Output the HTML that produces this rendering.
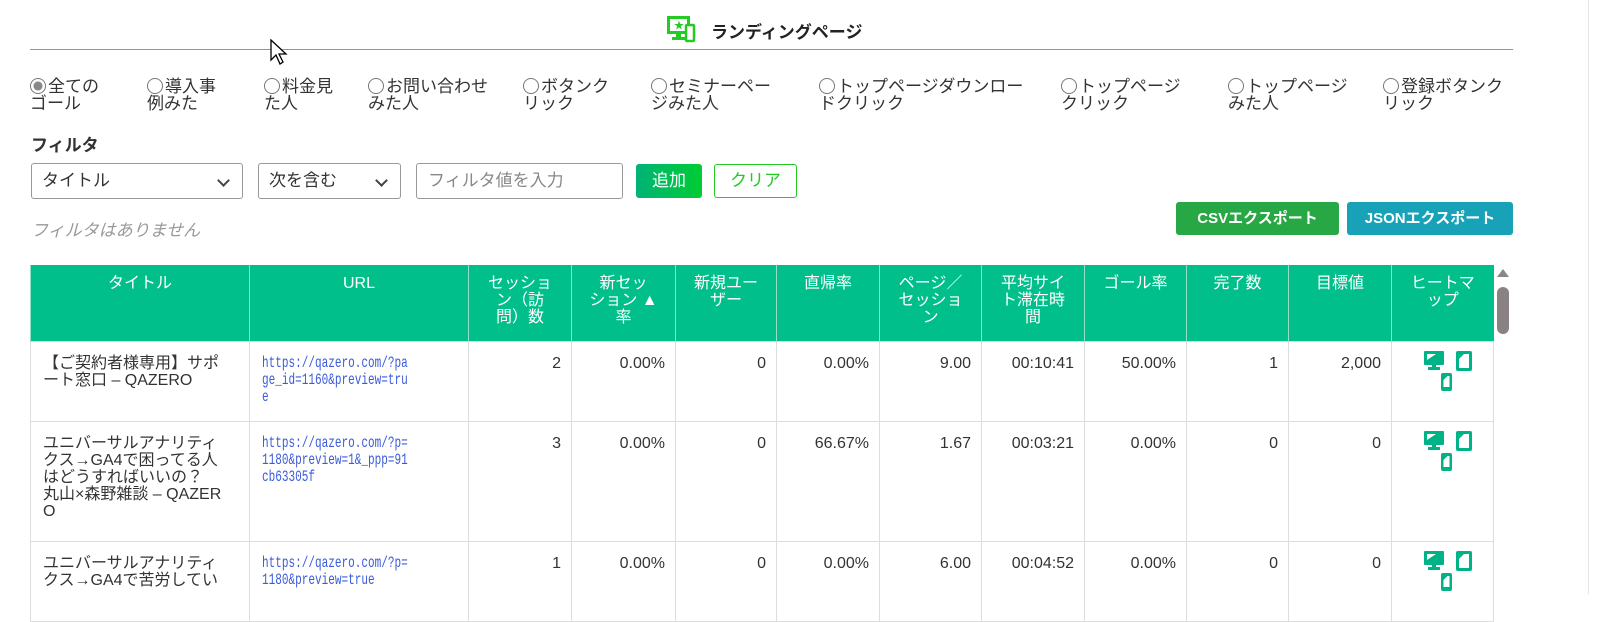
<!DOCTYPE html>
<html><head><meta charset="utf-8"><style>
*{box-sizing:border-box;margin:0;padding:0}
body{width:1602px;height:594px;overflow:hidden;background:#fff;font-family:"Liberation Sans","Noto Sans CJK JP",sans-serif;color:#333;position:relative;font-size:15px}
.abs{position:absolute}
.radio{position:absolute;top:78px;font-size:17px;line-height:17px;color:#333;white-space:nowrap}
.radio i{display:inline-block;width:16px;height:16px;border:1px solid #777;border-radius:50%;vertical-align:-2px;margin-right:2px;background:#fff}
.radio i.on{background:radial-gradient(#888 0 4px,#fff 5px)}
.sel{position:absolute;top:163px;height:36px;border:1px solid #999;border-radius:3px;font-size:17px;line-height:34px;padding-left:10px;color:#333}
.sel:after{content:"";position:absolute;right:14px;top:12px;width:7px;height:7px;border-right:2px solid #444;border-bottom:2px solid #444;transform:rotate(45deg)}
table{position:absolute;left:30px;top:265px;width:1463px;border-collapse:collapse;table-layout:fixed;font-size:16px}
th{background:#00bf8a;color:#fff;font-weight:normal;vertical-align:top;padding:10px 4px 0;height:76px;line-height:17px;border-left:1px solid #8fe0c6;text-align:center;white-space:nowrap;overflow:hidden}
td{border:1px solid #ddd;vertical-align:top;padding:13px 10px;line-height:17px;text-align:right;white-space:nowrap;overflow:hidden}
td.t{text-align:left;padding-left:12px}
td.u{text-align:left;color:#3b5bdb;font-family:"Liberation Mono",monospace;font-size:16px;padding-left:12px}
td.u div{width:195px;overflow:hidden}
td.u span{display:inline-block;transform:scaleX(0.69);transform-origin:0 0;line-height:17px}
td.h{text-align:center}
</style></head><body>
<svg class="abs" style="left:667px;top:16px" width="30" height="27" viewBox="0 0 30 27"><rect x="1.5" y="1.5" width="20" height="15" fill="none" stroke="#2c2" stroke-width="3"/><rect x="9" y="16" width="5" height="5" fill="#2c2"/><rect x="5" y="21" width="13" height="3" fill="#2c2"/><text x="7" y="13" font-size="10" fill="#2c2">★</text><rect x="19" y="9" width="8" height="16" rx="1" fill="#fff" stroke="#2c2" stroke-width="2.5"/></svg>
<div class="abs" style="left:711px;top:18px;font-size:17px;font-weight:bold;color:#222">ランディングページ</div>
<div class="abs" style="left:30px;top:49px;width:1483px;height:1px;background:#44cc44"></div>
<svg class="abs" style="left:270px;top:39px" width="20" height="28" viewBox="0 0 20 28"><path d="M1 1 L1 21 L6 16 L10 25 L13 23 L9 15 L16 15 Z" fill="#fff" stroke="#000" stroke-width="1.3"/></svg>
<div class="radio" style="left:30px"><i class="on"></i>全ての<br>ゴール</div>
<div class="radio" style="left:147px"><i></i>導入事<br>例みた</div>
<div class="radio" style="left:264px"><i></i>料金見<br>た人</div>
<div class="radio" style="left:368px"><i></i>お問い合わせ<br>みた人</div>
<div class="radio" style="left:523px"><i></i>ボタンク<br>リック</div>
<div class="radio" style="left:651px"><i></i>セミナーペー<br>ジみた人</div>
<div class="radio" style="left:819px"><i></i>トップページダウンロー<br>ドクリック</div>
<div class="radio" style="left:1061px"><i></i>トップページ<br>クリック</div>
<div class="radio" style="left:1228px"><i></i>トップページ<br>みた人</div>
<div class="radio" style="left:1383px"><i></i>登録ボタンク<br>リック</div>
<div class="abs" style="left:31px;top:131px;font-size:17px;font-weight:bold;color:#333">フィルタ</div>
<div class="sel" style="left:31px;width:212px">タイトル</div>
<div class="sel" style="left:258px;width:143px">次を含む</div>
<div class="abs" style="left:416px;top:163px;width:207px;height:36px;border:1px solid #999;border-radius:3px;font-size:17px;line-height:34px;padding-left:11px;color:#888">フィルタ値を入力</div>
<div class="abs" style="left:636px;top:164px;width:66px;height:34px;background:linear-gradient(90deg,#00b377,#00cc33);border-radius:3px;color:#fff;font-size:17px;line-height:34px;text-align:center">追加</div>
<div class="abs" style="left:714px;top:164px;width:83px;height:34px;border:1px solid #2c2;border-radius:3px;color:#2c2;font-size:17px;line-height:32px;text-align:center">クリア</div>
<div class="abs" style="left:31px;top:216px;font-size:17px;font-style:italic;color:#999">フィルタはありません</div>
<div class="abs" style="left:1176px;top:202px;width:163px;height:33px;background:#28a745;border-radius:3px;color:#fff;font-weight:bold;font-size:15px;line-height:33px;text-align:center">CSVエクスポート</div>
<div class="abs" style="left:1347px;top:202px;width:166px;height:33px;background:#17a2b8;border-radius:3px;color:#fff;font-weight:bold;font-size:15px;line-height:33px;text-align:center">JSONエクスポート</div>
<table>
<colgroup><col style="width:219px"><col style="width:219px"><col style="width:103px"><col style="width:104px"><col style="width:101px"><col style="width:103px"><col style="width:102px"><col style="width:103px"><col style="width:102px"><col style="width:102px"><col style="width:103px"><col style="width:102px"></colgroup>
<tr><th>タイトル</th><th>URL</th><th>セッショ<br>ン（訪<br>問）数</th><th>新セッ<br>ション ▲<br>率</th><th>新規ユー<br>ザー</th><th>直帰率</th><th>ページ／<br>セッショ<br>ン</th><th>平均サイ<br>ト滞在時<br>間</th><th>ゴール率</th><th>完了数</th><th>目標値</th><th>ヒートマ<br>ップ</th></tr>
<tr style="height:80px"><td class="t">【ご契約者様専用】サポ<br>ート窓口 – QAZERO</td><td class="u"><div><span>https://qazero.com/?pa<br>ge_id=1160&amp;preview=tru<br>e</span></div></td><td>2</td><td>0.00%</td><td>0</td><td>0.00%</td><td>9.00</td><td>00:10:41</td><td>50.00%</td><td>1</td><td>2,000</td><td class="h">ICON</td></tr>
<tr style="height:120px"><td class="t">ユニバーサルアナリティ<br>クス→GA4で困ってる人<br>はどうすればいいの？<br>丸山×森野雑談 – QAZER<br>O</td><td class="u"><div><span>https://qazero.com/?p=<br>1180&amp;preview=1&amp;_ppp=91<br>cb63305f</span></div></td><td>3</td><td>0.00%</td><td>0</td><td>66.67%</td><td>1.67</td><td>00:03:21</td><td>0.00%</td><td>0</td><td>0</td><td class="h">ICON</td></tr>
<tr style="height:80px"><td class="t">ユニバーサルアナリティ<br>クス→GA4で苦労してい</td><td class="u"><div><span>https://qazero.com/?p=<br>1180&amp;preview=true</span></div></td><td>1</td><td>0.00%</td><td>0</td><td>0.00%</td><td>6.00</td><td>00:04:52</td><td>0.00%</td><td>0</td><td>0</td><td class="h">ICON</td></tr>
</table>
<div class="abs" style="left:1497px;top:269px;width:0;height:0;border-left:6px solid transparent;border-right:6px solid transparent;border-bottom:8px solid #888"></div>
<div class="abs" style="left:1497px;top:287px;width:12px;height:47px;background:#8a8282;border-radius:6px"></div>
<div class="abs" style="left:1588px;top:0;width:1px;height:594px;background:#e6e6e6"></div>
<script>
var ic='<svg width="56" height="42" viewBox="0 0 56 42"><rect x="6" y="1" width="20" height="14" rx="1" fill="#00b386"/><path d="M9 4h9l-9 6z" fill="#fff"/><rect x="14" y="15" width="4" height="3" fill="#00b386"/><rect x="10" y="17" width="12" height="3" fill="#00b386"/><rect x="38" y="1" width="16" height="20" rx="2" fill="#00b386"/><rect x="41" y="4" width="10" height="14" fill="#fff"/><path d="M41 4h5l-5 5z" fill="#00b386"/><rect x="23" y="23" width="11" height="18" rx="2" fill="#00b386"/><rect x="25.5" y="26" width="6" height="11" fill="#fff"/><path d="M25.5 26h4l-4 4z" fill="#00b386"/></svg>';
document.querySelectorAll('td.h').forEach(function(t){t.innerHTML=ic;t.style.padding='8px 0 0 6px';});
</script>
</body></html>
